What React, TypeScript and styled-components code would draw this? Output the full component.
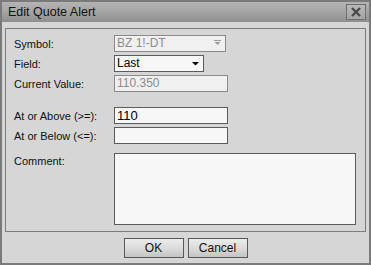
import styled, { createGlobalStyle } from "styled-components";

const GlobalStyle = createGlobalStyle`
    html, body {
        margin: 0;
        padding: 0;
        background: #d6d6d6;
    }
    body {
        font-family: "Liberation Sans", Arial, sans-serif;
        font-size: 11px;
        color: #000;
    }
`;

const Dialog = styled.div`
    box-sizing: border-box;
    width: 371px;
    height: 265px;
    border: 2px solid #7a7a7a;
    background: #d6d6d6;
    display: flex;
    flex-direction: column;
`;

const TitleBar = styled.div`
    height: 20px;
    flex-shrink: 0;
    display: flex;
    align-items: center;
    justify-content: space-between;
    padding: 0 3px 0 6px;
    background: linear-gradient(#b4b4b4, #a4a4a4 50%, #8e8e8e);
    font-size: 12.5px;
    color: #111;
`;

const CloseButton = styled.div`
    box-sizing: border-box;
    width: 20px;
    height: 16px;
    border: 1px solid #6e6e6e;
    background: linear-gradient(#b8b8b8, #a4a4a4);
    display: flex;
    align-items: center;
    justify-content: center;
`;

const GroupBox = styled.div`
    box-sizing: border-box;
    margin: 6px 3px 0 3px;
    height: 204px;
    border: 1px solid #7c7c7c;
    padding: 6px 8px 6px 8px;
    display: grid;
    grid-template-columns: 100px 1fr;
    grid-auto-rows: min-content;
    row-gap: 3px;
    align-items: center;
`;

const Label = styled.div<{ $top?: boolean }>`
    color: #111;
    align-self: ${(p) => (p.$top ? "start" : "center")};
    margin-top: ${(p) => (p.$top ? "8px" : "0")};
`;

const Spacer = styled.div`
    grid-column: 1 / span 2;
    height: 9px;
`;

const Box = styled.div<{ $width: number; $disabled?: boolean; $big?: boolean }>`
    box-sizing: border-box;
    width: ${(p) => p.$width}px;
    height: 17px;
    border: 1px solid ${(p) => (p.$disabled ? "#8a8a8a" : "#5c5c5c")};
    background: ${(p) => (p.$disabled ? "#f0f0f0" : "#f7f7f7")};
    color: ${(p) => (p.$disabled ? "#8c8c8c" : "#000")};
    font-size: ${(p) => (p.$big ? "13px" : "12px")};
    line-height: 15px;
    padding: 0 3px 0 2px;
    display: flex;
    align-items: center;
    justify-content: space-between;
    white-space: nowrap;
`;

const TextArea = styled.div`
    box-sizing: border-box;
    width: 242px;
    height: 72px;
    border: 1px solid #5c5c5c;
    background: #f7f7f7;
    margin-top: 6px;
`;

const Footer = styled.div`
    flex: 1;
    display: flex;
    justify-content: center;
    align-items: center;
    gap: 4px;
`;

const Button = styled.div`
    box-sizing: border-box;
    width: 60px;
    height: 20px;
    border: 1px solid #585858;
    background: linear-gradient(#ececec, #dcdcdc 50%, #c4c4c4);
    display: flex;
    align-items: center;
    justify-content: center;
    font-size: 12px;
    color: #111;
`;

function Arrow({ disabled }: { disabled?: boolean }) {
    return (
        <svg width="9" height="7" viewBox="0 0 9 7">
            {disabled && <rect x="1" y="0" width="7" height="1" fill="#9c9c9c" />}
            <polygon
                points={disabled ? "1.5,2 7.5,2 4.5,5" : "1,2 8,2 4.5,5.5"}
                fill={disabled ? "#9c9c9c" : "#000"}
            />
        </svg>
    );
}

export default function App() {
    return (
        <>
            <GlobalStyle />
            <Dialog>
                <TitleBar>
                    <span>Edit Quote Alert</span>
                    <CloseButton>
                        <svg width="12" height="10" viewBox="0 0 12 10">
                            <path d="M2 1 L10 9 M10 1 L2 9" stroke="#4a4a4a" strokeWidth="2.4" />
                        </svg>
                    </CloseButton>
                </TitleBar>
                <GroupBox>
                    <Label>Symbol:</Label>
                    <Box $width={112} $disabled>
                        <span>BZ 1!-DT</span>
                        <Arrow disabled />
                    </Box>
                    <Label>Field:</Label>
                    <Box $width={90}>
                        <span>Last</span>
                        <Arrow />
                    </Box>
                    <Label>Current Value:</Label>
                    <Box $width={114} $disabled>
                        110.350
                    </Box>
                    <Spacer />
                    <Label>At or Above (&gt;=):</Label>
                    <Box $width={114} $big>
                        110
                    </Box>
                    <Label>At or Below (&lt;=):</Label>
                    <Box $width={114} />
                    <Label $top>Comment:</Label>
                    <TextArea />
                </GroupBox>
                <Footer>
                    <Button>OK</Button>
                    <Button>Cancel</Button>
                </Footer>
            </Dialog>
        </>
    );
}
